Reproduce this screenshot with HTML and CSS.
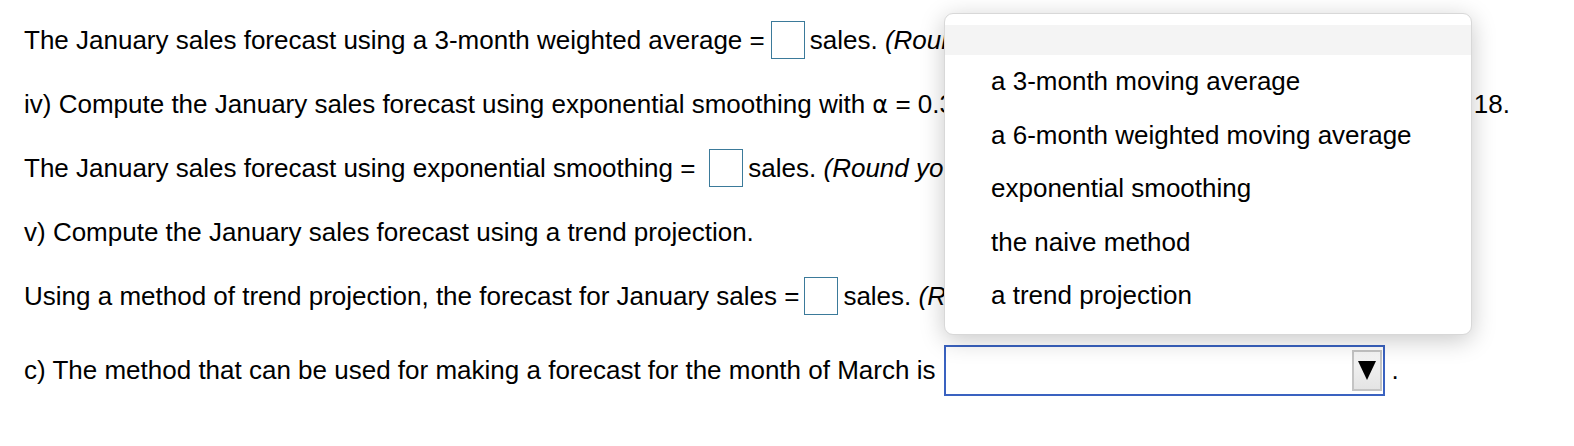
FILE: index.html
```html
<!DOCTYPE html>
<html>
<head>
<meta charset="utf-8">
<link rel="stylesheet" href="styles.css">
</head>
<body>
<div class="page">
  <div class="row"><span class="line">The January sales forecast using a 3-month weighted average =<span class="box box-tight"></span><span class="after">sales. <i>(Round your response to a whole number.)</i></span></span></div>
  <div class="row"><span class="line line-full"><span class="lead">iv) Compute the January sales forecast using exponential smoothing with <span class="alpha">α</span> = 0.30 and a December forecast of </span><span class="tail">18.</span></span></div>
  <div class="row"><span class="line">The January sales forecast using exponential smoothing =<span class="box box-wide"></span><span class="after">sales. <i>(Round your response to a whole number.)</i></span></span></div>
  <div class="row"><span class="line">v) Compute the January sales forecast using a trend projection.</span></div>
  <div class="row"><span class="line">Using a method of trend projection, the forecast for January sales =<span class="box box-tight2"></span><span class="after">sales. <i>(Round your response to a whole number.)</i></span></span></div>
  <div class="row row-last"><span class="line">c) The method that can be used for making a forecast for the month of March is<span class="select"><span class="arrow"><svg width="18" height="21" viewBox="0 0 18 21"><polygon points="0,1 18,1 9,20" fill="#000"/></svg></span></span><span class="dot">.</span></span></div>

  <div class="menu">
    <div class="opt opt-empty"></div>
    <div class="opt">a 3-month moving average</div>
    <div class="opt">a 6-month weighted moving average</div>
    <div class="opt">exponential smoothing</div>
    <div class="opt">the naive method</div>
    <div class="opt">a trend projection</div>
  </div>
</div>
</body>
</html>
```
FILE: styles.css
```css
html, body {
  margin: 0;
  padding: 0;
  background: #fff;
}
body {
  font-family: "Liberation Sans", Arial, sans-serif;
  font-size: 26px;
  color: #000;
}
.page {
  position: relative;
  padding: 8px 0 0 24px;
  width: 1550px;
  height: 438px;
  overflow: hidden;
}
.row {
  height: 64px;
  display: flex;
  align-items: center;
  white-space: nowrap;
}
.row-last {
  margin-top: 10px;
}
.line {
  display: inline-flex;
  align-items: center;
  white-space: pre;
}
.line-full {
  width: 1486px;
  flex: none;
}
.lead {
  flex: 1;
  min-width: 0;
  overflow: hidden;
}
.tail {
  flex: none;
}
.box {
  display: inline-block;
  width: 32px;
  height: 36px;
  border: 1.5px solid #3b7a9a;
  box-sizing: content-box;
}
.box-tight { margin-left: 6px; }
.box-tight2 { margin-left: 5px; }
.box-wide { margin-left: 14px; }
.after { margin-left: 5px; }
.alpha { font-family: "DejaVu Sans", sans-serif; font-size: 24px; }
.select {
  display: inline-flex;
  justify-content: flex-end;
  align-items: center;
  width: 436px;
  height: 47px;
  margin-left: 9px;
  border: 2px solid #3a62c0;
  padding-right: 1px;
  box-sizing: content-box;
}
.arrow {
  display: flex;
  align-items: center;
  justify-content: center;
  width: 26px;
  height: 37px;
  border: 2px solid #c4c4c4;
  background: linear-gradient(#f6f6f6, #e4e4e4);
}
.dot { margin-left: 6px; }
.menu {
  position: absolute;
  left: 944px;
  top: 13px;
  width: 526px;
  padding: 11px 0;
  background: #fff;
  border: 1px solid #d8d8d8;
  border-radius: 9px;
  box-shadow: 0 5px 24px rgba(0,0,0,0.22);
}
.opt {
  padding: 14px 0 14px 46px;
  line-height: 25.5px;
  white-space: nowrap;
}
.opt-empty {
  height: 0;
  padding: 15px 0;
  background: #f4f4f4;
}
```
